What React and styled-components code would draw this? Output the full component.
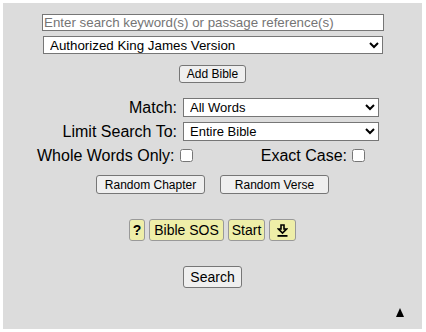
import styled, { createGlobalStyle } from "styled-components";

const Global = createGlobalStyle`
    body {
        margin: 0;
        background: #fff;
        font-family: "Liberation Sans", Arial, sans-serif;
    }
`;

const Panel = styled.div`
    position: relative;
    margin: 3px;
    width: 419px;
    height: 326px;
    box-sizing: border-box;
    padding-top: 11px;
    background: #dcdcdc;
    color: #000;
`;

const SearchInput = styled.input`
    display: block;
    box-sizing: border-box;
    width: 342px;
    height: 17px;
    margin: 0 0 0 39px;
    padding: 0 1px;
    border: 1px solid #767676;
    background: #fff;
    font-family: inherit;
    font-size: 13.33px;
    outline: none;

    &::placeholder {
        color: #757575;
    }
`;

const Select = styled.select`
    display: block;
    box-sizing: border-box;
    width: ${(p) => p.$w}px;
    height: ${(p) => p.$h}px;
    margin: ${(p) => p.$m || "0"};
    padding: 0 0 0 2px;
    border: 1px solid #767676;
    border-radius: 0;
    background: #fff;
    color: #000;
    font-family: inherit;
    font-size: ${(p) => p.$fs}px;
`;

const Row = styled.div`
    display: flex;
    justify-content: center;
    gap: ${(p) => p.$gap || 0}px;
    margin-top: ${(p) => p.$mt}px;
`;

const GrayButton = styled.button`
    box-sizing: border-box;
    width: ${(p) => (p.$w ? `${p.$w}px` : "auto")};
    height: ${(p) => p.$h}px;
    padding: 0 ${(p) => p.$px || 6}px;
    border: 1px solid #767676;
    border-radius: 3px;
    background: #efefef;
    color: #000;
    font-family: inherit;
    font-size: ${(p) => p.$fs}px;
`;

const OptionsGrid = styled.div`
    display: grid;
    grid-template-columns: 140px 196px;
    column-gap: 6px;
    row-gap: 5px;
    margin: 15px 0 0 34px;
`;

const Label = styled.label`
    display: flex;
    align-items: center;
    justify-content: flex-end;
    font-size: 16px;
    white-space: nowrap;
`;

const CheckRow = styled.div`
    display: flex;
    justify-content: space-between;
    width: 331px;
    margin: 6px 0 0 34px;
    height: 17px;
`;

const CheckLabel = styled.label`
    display: flex;
    align-items: center;
    font-size: 16px;
    white-space: nowrap;

    input {
        width: 13px;
        height: 13px;
        margin: 0 3px 0 5px;
    }
`;

const YellowButton = styled.button`
    box-sizing: border-box;
    height: 22px;
    padding: 0 ${(p) => p.$px || 4}px;
    border: 1px solid #999;
    border-radius: 3px;
    background: #eeeea8;
    color: #000;
    font-family: inherit;
    font-size: 14px;
    font-weight: ${(p) => (p.$bold ? 700 : 400)};
    display: flex;
    align-items: center;
    justify-content: center;
`;

const TopArrow = styled.div`
    position: absolute;
    right: 18px;
    bottom: 12px;
    width: 8px;
    height: 9px;
    display: flex;
`;

function DownloadIcon() {
    return (
        <svg width="11" height="13" viewBox="0 0 11 13">
            <path d="M4 1 H7 V5 H9.5 L5.5 9 L1.5 5 H4 Z" fill="none" stroke="#000" strokeWidth="1.6" strokeLinejoin="miter" />
            <rect x="0.5" y="11" width="10" height="1.8" fill="#000" />
        </svg>
    );
}

export default function App() {
    return (
        <>
            <Global />
            <Panel>
                <SearchInput placeholder="Enter search keyword(s) or passage reference(s)" />
                <Select $w={340} $h={18} $fs={13.33} $m="5px 0 0 40px" defaultValue="kjv">
                    <option value="kjv">Authorized King James Version</option>
                </Select>
                <Row $mt={11}>
                    <GrayButton $h={18} $fs={12} $px={7}>Add Bible</GrayButton>
                </Row>
                <OptionsGrid>
                    <Label>Match:</Label>
                    <Select $w={196} $h={19} $fs={13}>
                        <option>All Words</option>
                    </Select>
                    <Label>Limit Search To:</Label>
                    <Select $w={196} $h={19} $fs={13}>
                        <option>Entire Bible</option>
                    </Select>
                </OptionsGrid>
                <CheckRow>
                    <CheckLabel>Whole Words Only:<input type="checkbox" /></CheckLabel>
                    <CheckLabel>Exact Case:<input type="checkbox" /></CheckLabel>
                </CheckRow>
                <Row $mt={11} $gap={15}>
                    <GrayButton $w={109} $h={19} $fs={12}>Random Chapter</GrayButton>
                    <GrayButton $w={109} $h={19} $fs={12}>Random Verse</GrayButton>
                </Row>
                <Row $mt={25} $gap={4}>
                    <YellowButton $bold $px={3}>?</YellowButton>
                    <YellowButton>Bible SOS</YellowButton>
                    <YellowButton $px={3}>Start</YellowButton>
                    <YellowButton $px={7}><DownloadIcon /></YellowButton>
                </Row>
                <Row $mt={25}>
                    <GrayButton $h={22} $fs={14} $px={6}>Search</GrayButton>
                </Row>
                <TopArrow>
                    <svg width="8" height="9" viewBox="0 0 8 9">
                        <polygon points="4,0 8,9 0,9" fill="#000" />
                    </svg>
                </TopArrow>
            </Panel>
        </>
    );
}
